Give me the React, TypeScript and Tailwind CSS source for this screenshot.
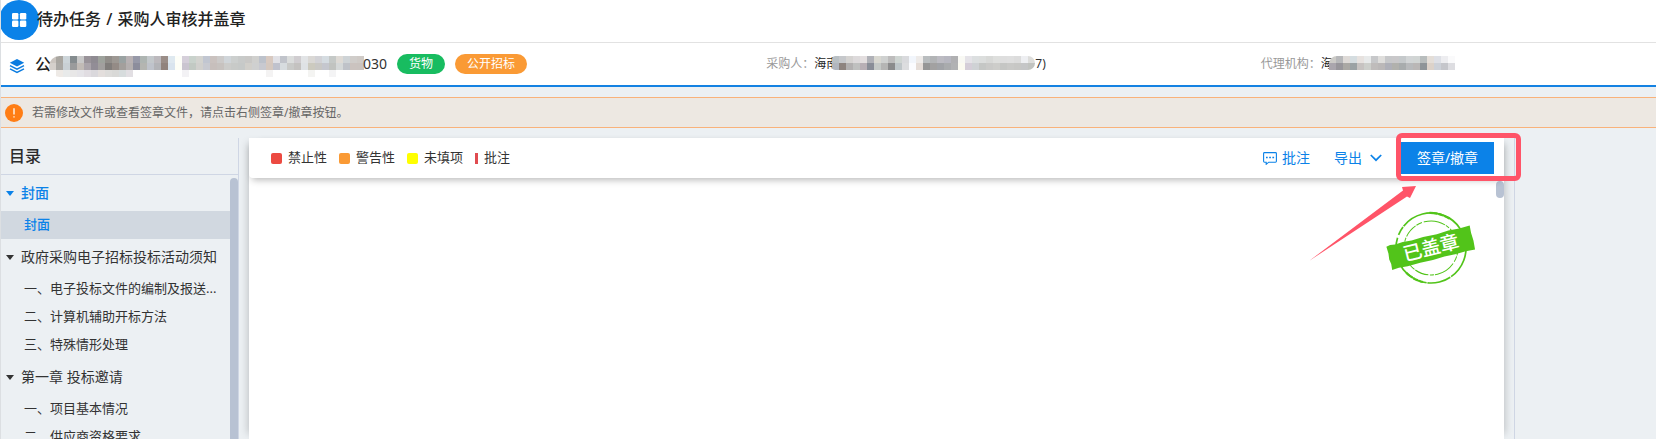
import React from "react";

const PROJECT_MOSAIC = [
  "cbc5bf a9a6a0 cdd5d9 858c8f c8c8c8 999399 8f8b92 9ea29c 918d89 9d9893 9aa2a2 b8b1b3 9799a8 aeb5b2 c3c8cb bcb9bd 9a8d87 dfe9f0 fdfef8 d5cfda c9d2cc d3d3cf c1c6d1 cac2bf cccac9 d0d5d9 cccfce c8cac9 c9c8c6 d0d0ce bdc2cb d8c9c0 e1e1e6 c1c4cb dbdddc d0cdd0 e2e4e6 dad8d5 d2d2d6 d5dce1 c5c9c7 dedad5 ced3d6 d0cdca cfcac6",
  "d5d0cb aaa8a4 c9d0d4 9a9b9c c1bbb6 aaa4aa 928d96 a29f9e 817d7b 948b86 a39f9c b4afaf 8c8d9c b4b5b1 bfc3cb b3b4b8 91837d d9e4ee fdfef6 cac5d0 c2c9c3 d1d0cd c8cad1 c7bfbc c7c2bf ccccca c8cac8 c6c9c8 d1cfca cfd0d0 c8c9d0 d5c8bf c0c2cd d7dcdf c9cac8 c4c2c0 dfe2e5 cccabf c9c8c5 c5c7ce c1c3c0 d5d8d8 bfc2c8 cbc3bf cac3bf",
  "ffffff eeeae6 e8eaea e8e7e7 e5e4e8 e1dde2 dad8dc e3dedc dddcda d9d9d7 d7dcdd e2dfe3 ffffff ffffff ffffff ffffff ffffff ffffff ffffff f3f2f5 ffffff ffffff ffffff ffffff ffffff ffffff ffffff ffffff ffffff ffffff ffffff f4f3f3 ffffff ffffff ffffff ffffff ffffff f4f4f2 ffffff ffffff f4f4f5 ffffff ffffff ffffff ffffff",
];
const BUYER_MOSAIC = [
  "b9c0c4 c6c8cb d5d3d1 dddadb e3dedf b0b1b7 d9d8d1 cfd1d0 bdbcbc cfd5d2 d9dadd f2f6fc eeebe9 b9bdbf b2b4b6 bcbbc2 b7b7c0 b0b0b2 f9f9f4 e5e3e8 dcdfe0 dcdedd d8d9d7 dedfdd dedede dfdfdf dcdcdc eeeff2 dddddb",
  "b1b6be 8e847f b2b0b0 bfc0bf b8afb5 898d97 c5c9c7 b5b5b4 8b8b8c bfc6c9 dcdddf fbfcff e5ddd8 969696 a2a1a1 a1a3a7 a9abad b1b2b3 fcfbf1 d5ced8 cfd2d5 c5c7c5 cacac8 cdcdca c5c6c4 c9c9c7 c7c7c5 c5c6c7 c1c3c0",
];
const AGENCY_MOSAIC = [
  "cccbc7 b7b8ba dedad7 d5dde0 e7e2df e8eaea c7c8ca dfdedc c7c8ca c9c8ca c5c9cb d2d5d6 d1d5d4 b8bdbd e4ded8 dee0e6 ededf0 fafafb",
  "aaa6ad 98969b aaa8a4 9ba2a4 c7c3c1 cdcfcb bfbcbb bbb8b8 afb0b8 b1b1ad a8acad b8babc bab7b6 8e9498 dcd2c9 cdd1d8 c5c6cb dddde1",
];

function Mosaic({ rows, className }: { rows: string[]; className: string }) {
  return (
    <span aria-hidden="true" className={`block shrink-0 overflow-hidden ${className}`}>
      {rows.map((row, i) => (
        <span key={i} className="flex h-[7px]">
          {row.split(" ").map((c, j) => (
            <span key={j} className="h-[7px] w-[7px] shrink-0" style={{ backgroundColor: `#${c}` }} />
          ))}
        </span>
      ))}
    </span>
  );
}

const CHAPTERS = [
  { title: "封面", active: true, items: ["封面"] },
  {
    title: "政府采购电子招标投标活动须知",
    items: ["一、电子投标文件的编制及报送...", "二、计算机辅助开标方法", "三、特殊情形处理"],
  },
  { title: "第一章 投标邀请", items: ["一、项目基本情况", "二、供应商资格要求"] },
];

const LEGEND = [
  { label: "禁止性", mark: "w-[11px] rounded-xs bg-[#ec4a41]" },
  { label: "警告性", mark: "w-[11px] rounded-xs bg-[#fa9a35]" },
  { label: "未填项", mark: "w-[11px] rounded-xs bg-[#ffff00]" },
  { label: "批注", mark: "w-[3px] bg-[#e04b50]" },
];

function Header() {
  return (
    <header className="flex h-[43px] shrink-0 items-start border-b border-[#e2e2e2] bg-white">
      <button
        aria-label="菜单"
        className="-ml-0.5 flex h-10 w-10 shrink-0 items-center justify-center rounded-full bg-[#0b82e8]"
      >
        <svg width="16" height="16" viewBox="0 0 16 16" fill="#fff">
          <rect x="1" y="1" width="6.4" height="6.4" rx="1.2" />
          <rect x="8.9" y="1" width="6.4" height="6.4" rx="1.2" />
          <rect x="1" y="8.6" width="6.4" height="6.4" rx="1.2" />
          <rect x="8.9" y="8.6" width="6.4" height="6.4" rx="1.2" />
        </svg>
      </button>
      <h1 className="-ml-0.5 pt-[7px] text-base leading-6 font-medium text-[#222]">
        待办任务 <span className="mx-px">/</span> 采购人审核并盖章
      </h1>
    </header>
  );
}

function ProjectBar() {
  return (
    <section className="grid h-11 shrink-0 grid-cols-[46%_30%_1fr] border-b-2 border-[#1482e2] bg-white text-xs">
      <div className="flex items-center pl-2">
        <svg width="16" height="16" viewBox="0 0 16 16" className="mt-1 shrink-0">
          <path d="M8 1 15.2 4.7 8 8.4.8 4.7Z" fill="#0b7ce0" />
          <path d="M1 7.6 8 11.1 15 7.6M1 10.8 8 14.3 15 10.8" fill="none" stroke="#0b7ce0" strokeWidth="1.5" />
        </svg>
        <span className="ml-2.5 text-base font-medium text-[#222]">公</span>
        <Mosaic rows={PROJECT_MOSAIC} className="-ml-0.5 mt-1 rounded-l-2xl" />
        <span className="-ml-px text-sm text-[#333]">030</span>
        <span className="ml-2.5 h-5 shrink-0 rounded-full bg-[#18bc60] px-3 leading-5 text-white">货物</span>
        <span className="ml-2.5 h-5 shrink-0 rounded-full bg-[#fa9a35] px-3 leading-5 text-white">公开招标</span>
      </div>
      <div className="flex items-center pl-1">
        <span className="text-[#999]">采购人：</span>
        <span className="text-[#222]">海南</span>
        <Mosaic rows={BUYER_MOSAIC} className="relative -mt-0.5 -ml-1.5 rounded-l rounded-r-lg" />
        <span className="text-[#333]">7)</span>
      </div>
      <div className="flex items-center pl-0.5">
        <span className="text-[#999]">代理机构：</span>
        <span className="text-[#222]">海</span>
        <Mosaic rows={AGENCY_MOSAIC} className="relative -mt-0.5 -ml-1 rounded-tl-lg" />
      </div>
    </section>
  );
}

function Notice() {
  return (
    <div
      role="alert"
      className="mt-2.5 flex h-[31px] shrink-0 items-center gap-[9px] border-y border-[#f9b27a] bg-[#ede8e2] pl-1 text-xs text-[#666]"
    >
      <svg width="18" height="18" viewBox="0 0 18 18" className="shrink-0">
        <circle cx="9" cy="9" r="9" fill="#ff7d14" />
        <path d="M9 4.2V10.4M9 12.2V13.6" stroke="#ffe2c8" strokeWidth="1.7" />
      </svg>
      <p>若需修改文件或查看签章文件，请点击右侧签章/撤章按钮。</p>
    </div>
  );
}

function Sidebar() {
  return (
    <aside className="flex w-[238px] shrink-0 flex-col border-r border-[#cfd6e4]">
      <h2 className="h-[37px] shrink-0 border-b border-[#cfd6e4] pl-2 text-base leading-9 font-medium text-[#2b2b2b]">目录</h2>
      <div className="flex min-h-0 flex-1">
        <nav className="min-w-0 flex-1 overflow-hidden text-[#333]">
          {CHAPTERS.map((c) => (
            <section key={c.title}>
              <button
                className={`flex h-9 w-full items-center gap-[7px] pl-[5px] text-sm whitespace-nowrap ${c.active ? "font-medium text-[#0b82e8]" : ""}`}
              >
                <svg width="8" height="5" viewBox="0 0 8 5" className="shrink-0" fill="currentColor">
                  <path d="M0 0H8L4 5Z" />
                </svg>
                {c.title}
              </button>
              {c.items.map((item) => (
                <a
                  key={item}
                  href="#"
                  className={`block h-7 pl-[23px] text-[13px] leading-[26px] whitespace-nowrap ${c.active ? "bg-[#d1d8e0] font-medium text-[#0b82e8]" : ""}`}
                >
                  {item}
                </a>
              ))}
            </section>
          ))}
        </nav>
        <div className="mt-[3px] w-2 shrink-0 rounded-t-full bg-[#b8c2d3]" />
      </div>
    </aside>
  );
}

function Stamp() {
  return (
    <svg width="96" height="80" viewBox="0 0 96 80" className="absolute top-[30px] right-[25px]" role="img" aria-label="已盖章">
      <g transform="rotate(-14 48 40)">
        <g fill="none" stroke="#52c41a">
          <circle cx="48" cy="40" r="35" strokeWidth="1.7" strokeDasharray="42 1 24 .8 11 2 30 1 17 3 9 1" />
          <circle cx="48" cy="40" r="27" strokeWidth="1" strokeDasharray="14 1 6 2 22 1 4 1.5" />
          <path d="M55 5.6A35 35 0 0 1 73 16M18 58A35 35 0 0 0 32 71" strokeWidth="2.2" strokeDasharray="8 1 5 .8" />
        </g>
        <path
          d="M5 28 9 27.2 14 28 22 27.4 31 28 43 27.5 57 28 69 27.3 80 28 91 27.5 90.5 35 91 43 90.4 52 81 51.6 70 52 59 51.4 47 52 34 51.6 21 52 12 51.5 5 52 5.5 46 4.7 41 5.4 35Z"
          fill="#52c41a"
        />
        <text x="48" y="46.5" textAnchor="middle" fill="#fff" fontSize="19" fontWeight="500">
          已盖章
        </text>
      </g>
    </svg>
  );
}

function Toolbar() {
  return (
    <div className="relative z-10 flex h-10 shrink-0 items-center rounded-b bg-white pr-2.5 pl-[22px] shadow-[0_5px_7px_-3px_rgba(0,0,0,0.28)]">
      <ul className="flex items-center gap-3 text-[13px] text-[#333]">
        {LEGEND.map((l) => (
          <li key={l.label} className="flex items-center gap-1.5">
            <span className={`h-[11px] ${l.mark}`} />
            {l.label}
          </li>
        ))}
      </ul>
      <div className="ml-auto flex items-center text-sm text-[#0b82e8]">
        <button className="flex items-center gap-[5px]">
          <svg width="14" height="13" viewBox="0 0 14 13" fill="none" stroke="currentColor">
            <path d="M1.5.6H12.5Q13.4.6 13.4 1.5V9.3Q13.4 10.2 12.5 10.2H5.7L3.2 12.3V10.2H1.5Q.6 10.2.6 9.3V1.5Q.6.6 1.5.6Z" strokeWidth="1.1" />
            <path d="M3 5.5H4.7M6.2 5.5H7.9M9.4 5.5H11.1" strokeWidth="1.5" />
          </svg>
          批注
        </button>
        <button className="ml-6 flex items-center gap-2">
          导出
          <svg width="12" height="8" viewBox="0 0 12 8" fill="none" stroke="currentColor" strokeWidth="1.7">
            <path d="M.8 1 6 6.2 11.2 1" />
          </svg>
        </button>
        <div className="relative ml-[19px]">
          <button className="h-8 w-[93px] bg-[#0b82e8] text-white">签章/撤章</button>
          <div className="pointer-events-none absolute -top-[9px] -left-[5px] h-12 w-[125px] rounded-md border-5 border-[#ff5468]" />
          <svg width="108" height="76" viewBox="0 0 108 76" className="pointer-events-none absolute top-[44px] -left-[92px]">
            <path d="M0 75 94 4.5 93 1 107 0 101 12 98 10.5Z" fill="#ff5468" />
          </svg>
        </div>
      </div>
    </div>
  );
}

export default function App() {
  return (
    <div className="flex h-screen flex-col overflow-hidden border-l border-[#dcdfe2] bg-[#ecf0f3] font-['Noto_Sans','Noto_Sans_CJK_SC',sans-serif]">
      <Header />
      <ProjectBar />
      <Notice />
      <div className="mt-2.5 flex min-h-0 flex-1">
        <Sidebar />
        <main className="ml-2.5 flex min-w-0 flex-1 flex-col bg-white shadow-[-6px_0_8px_-5px_rgba(0,0,0,0.2),6px_0_8px_-5px_rgba(0,0,0,0.2)]">
          <Toolbar />
          <div className="relative flex-1">
            <div className="absolute top-[3px] right-0 h-[17px] w-2 rounded-full bg-[#b8c2d3]" />
            <Stamp />
          </div>
        </main>
        <div className="ml-2.5 w-[142px] shrink-0 border-l border-[#cfd6e4]" />
      </div>
    </div>
  );
}
